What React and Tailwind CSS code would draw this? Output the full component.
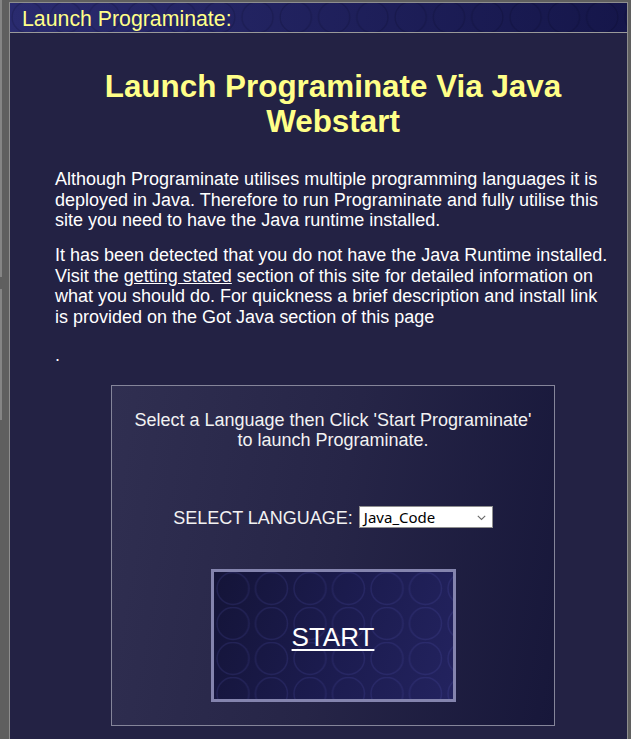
export default function App() {
  return (
    <div className="w-[631px] h-[739px] bg-[#5f5f5f] flex overflow-hidden font-['Liberation_Sans',Arial,sans-serif]">
      <div className="w-[9px] shrink-0 flex flex-col">
        <div className="h-[277px] w-[2px] bg-[#858585]" />
        <div className="h-[12px]" />
        <div className="h-[131px] w-[2px] bg-[#858585]" />
      </div>
      <div className="mt-[2px] mr-[3px] flex-1 flex flex-col border-l border-r border-t border-[#8e8e8e] bg-[#232244]">
        <header className="relative h-[30px] shrink-0 border-b border-[#9a9a9a] bg-[linear-gradient(90deg,#2a2b6f,#15164a)] overflow-hidden">
          <svg className="absolute inset-0 w-full h-full" aria-hidden="true">
            <defs>
              <pattern id="hdrc" patternUnits="userSpaceOnUse" width="38.3" height="60" x="0" y="0">
                <circle cx="17.7" cy="14.3" r="15.6" fill="none" stroke="rgba(0,0,20,0.16)" strokeWidth="1.4" />
              </pattern>
            </defs>
            <rect width="100%" height="100%" fill="url(#hdrc)" />
          </svg>
          <div className="relative pl-[12px] pt-[2px] leading-[29px] text-[21.3px] text-[#ffff88] whitespace-nowrap">
            Launch Programinate:
          </div>
        </header>

        <div className="ml-[45px] w-[556px]">
          <h1 className="pt-[35.5px] text-center font-bold text-[31.4px] leading-[35px] text-[#ffff88]">
            Launch Programinate Via Java
            <br />
            Webstart
          </h1>

          <p className="mt-[30.5px] text-[18px] leading-[20.5px] text-white whitespace-nowrap">
            Although Programinate utilises multiple programming languages it is
            <br />
            deployed in Java. Therefore to run Programinate and fully utilise this
            <br />
            site you need to have the Java runtime installed.
          </p>

          <p className="mt-[14.5px] text-[18px] leading-[20.5px] text-white whitespace-nowrap">
            It has been detected that you do not have the Java Runtime installed.
            <br />
            Visit the <a href="#" className="underline">getting stated</a> section of this site for detailed information on
            <br />
            what you should do. For quickness a brief description and install link
            <br />
            is provided on the Got Java section of this page
          </p>

          <p className="mt-[17.5px] text-[18px] leading-[20.5px] text-white">.</p>

          <div className="mt-[20.2px] mx-auto w-[444px] border border-[#85859a] bg-[linear-gradient(100deg,#302f51_0%,#262547_50%,#17173a_100%)] pt-[24px] pb-[22.5px]">
            <p className="text-center text-[18px] leading-[20px] text-[#f2f2f2] whitespace-nowrap">
              Select a Language then Click 'Start Programinate'
              <br />
              to launch Programinate.
            </p>

            <div className="mt-[56px] h-[22px] flex items-center justify-center gap-[6px]">
              <span className="pt-[1px] text-[18px] leading-[20px] text-[#f2f2f2] whitespace-nowrap">SELECT LANGUAGE:</span>
              <div className="relative w-[134px] h-[22px] bg-white border border-[#8f8f8f] flex items-center pl-[4px]">
                <span className="font-['Noto_Sans',sans-serif] text-[15px] leading-[20px] text-black">Java_Code</span>
                <svg className="absolute right-[6px] top-[8px]" width="9" height="6" viewBox="0 0 9 6" aria-hidden="true">
                  <path d="M0.8 0.8 L4.5 4.5 L8.2 0.8" fill="none" stroke="#6a6a6a" strokeWidth="1.1" />
                </svg>
              </div>
            </div>

            <div className="relative mt-[41px] mx-auto w-[245px] h-[133px] border-[3px] border-[#8484ae] overflow-hidden bg-[linear-gradient(110deg,#141438,#1c1c50_55%,#23235f)] flex items-center justify-center">
              <svg className="absolute inset-0 w-full h-full" aria-hidden="true">
                <defs>
                  <pattern id="btnc" patternUnits="userSpaceOnUse" width="38.5" height="35" x="0" y="0">
                    <circle cx="19" cy="16.5" r="16" fill="none" stroke="rgba(90,90,190,0.18)" strokeWidth="1.4" />
                  </pattern>
                </defs>
                <rect width="100%" height="100%" fill="url(#btnc)" />
              </svg>
              <a href="#" className="relative pt-[4px] text-[26px] text-white underline decoration-2 underline-offset-[3px]">START</a>
            </div>
          </div>
        </div>
      </div>
    </div>
  );
}
